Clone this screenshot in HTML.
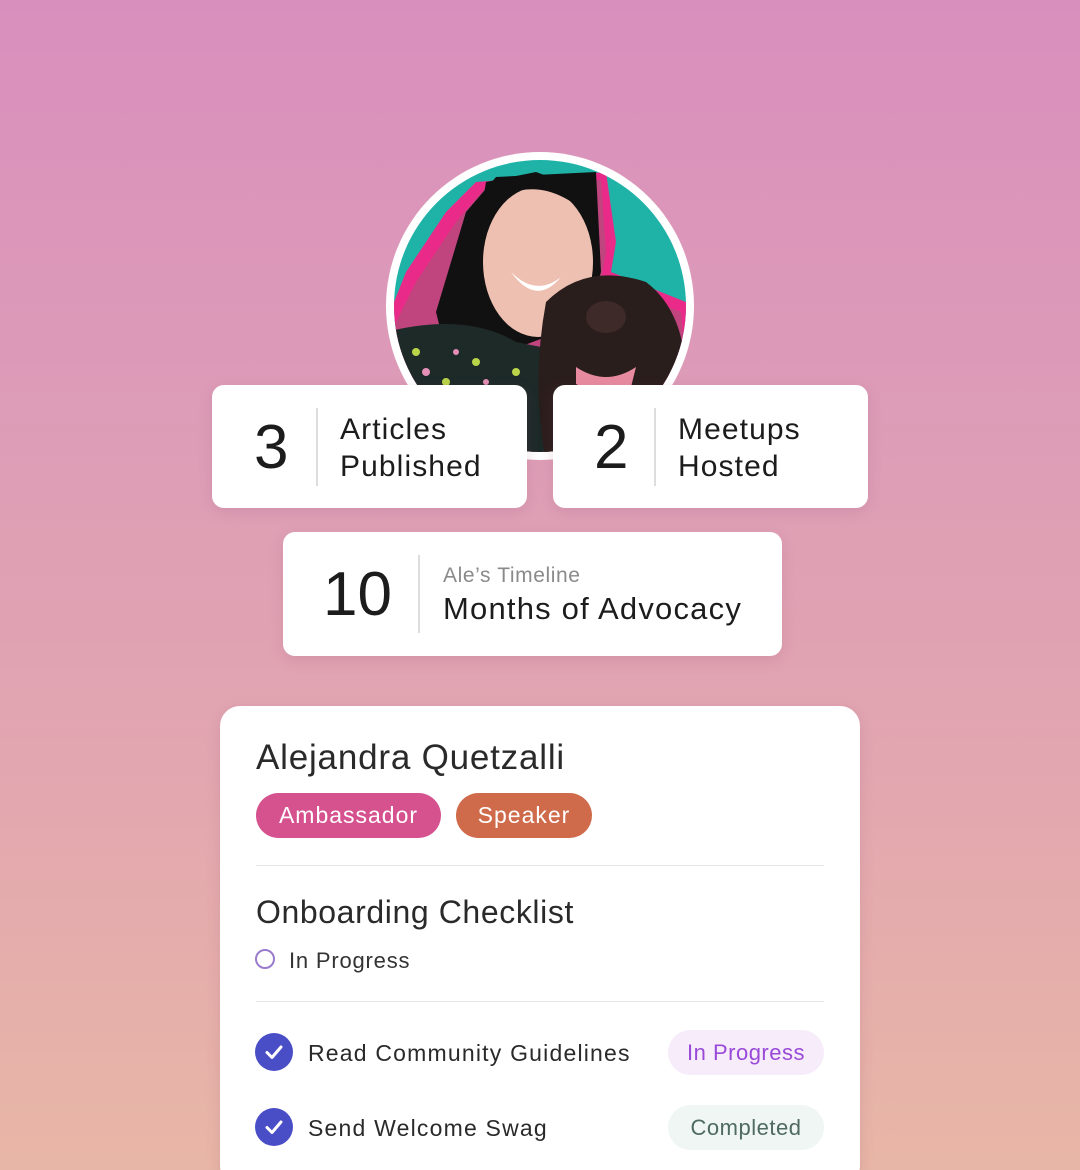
<!DOCTYPE html>
<html style="background:#e8b6a6"><head><meta charset="utf-8"><style>
*{margin:0;padding:0;box-sizing:border-box}
html,body{width:1080px;height:1170px;overflow:hidden}
body{position:relative;font-family:"Liberation Sans",sans-serif;background:linear-gradient(180deg,#d98fbd 0%,#dd9cb7 35%,#e2a6b0 65%,#e8b6a6 100%)}
.abs{position:absolute}
.card{position:absolute;background:#fff;border-radius:12px;box-shadow:0 4px 14px rgba(150,80,110,.18)}
.num{position:absolute;font-size:62px;color:#1c1c1c;line-height:1}
.div{position:absolute;width:2px;background:#ddd}
.lbl{position:absolute;font-size:30px;color:#1c1c1c;line-height:37px;letter-spacing:1.1px}
.pill{position:absolute;border-radius:23px;color:#fff;font-size:23px;text-align:center;line-height:45px;letter-spacing:1px}
.hr{position:absolute;left:36px;width:568px;height:1px;background:#e6e6e6}
.chk{position:absolute;width:38px;height:38px;border-radius:50%;background:#4a4ec6}
</style></head><body>
<svg class="abs" style="left:386px;top:152px" width="308" height="310" viewBox="0 0 308 310">
<defs><clipPath id="c"><circle cx="154" cy="154" r="146"/></clipPath></defs>
<circle cx="154" cy="154" r="154" fill="#fff"/>
<g clip-path="url(#c)">
<rect width="308" height="310" fill="#1fb3a8"/>
<path d="M20 120 L60 60 L90 30 L220 20 L230 90 L225 120 L300 150 L308 310 L0 310 L0 170 Z" fill="#ea2a88"/>
<path d="M30 130 L70 70 L100 35 L215 28 L220 100 L215 130 L295 160 L308 310 L0 310 L5 180 Z" fill="#c0457f"/>
<path d="M50 160 L80 60 L110 25 L210 20 L215 120 L200 170 L120 200 L60 200 Z" fill="#111"/>
<ellipse cx="152" cy="110" rx="55" ry="75" fill="#eec0b2"/>
<path d="M95 60 Q150 10 210 70 L205 40 L150 20 L100 30 Z" fill="#111"/>
<path d="M125 120 Q150 145 175 125 Q150 155 125 120Z" fill="#fff"/>
<path d="M0 180 Q80 160 130 190 L180 200 L170 310 L0 310 Z" fill="#1d2a28"/>
<g fill="#b9d448"><circle cx="30" cy="200" r="4"/><circle cx="60" cy="230" r="4"/><circle cx="90" cy="210" r="4"/><circle cx="110" cy="250" r="4"/><circle cx="45" cy="260" r="4"/><circle cx="130" cy="220" r="4"/></g>
<g fill="#e48fb5"><circle cx="40" cy="220" r="4"/><circle cx="80" cy="250" r="4"/><circle cx="100" cy="230" r="3"/><circle cx="70" cy="200" r="3"/></g>
<path d="M160 150 Q200 110 260 130 Q300 160 300 230 L290 310 L160 310 Q145 230 160 150Z" fill="#2a1e1c"/>
<ellipse cx="220" cy="165" rx="20" ry="16" fill="#3e2a28"/>
<path d="M190 215 Q220 235 250 215 L245 235 Q215 245 190 232Z" fill="#e88ba0"/>
</g></svg>

<div class="card" style="left:212px;top:385px;width:315px;height:123px">
<div class="num" style="left:42px;top:32px">3</div><div class="div" style="left:104px;top:23px;height:78px"></div>
<div class="lbl" style="left:128px;top:26px">Articles<br>Published</div></div>
<div class="card" style="left:553px;top:385px;width:315px;height:123px">
<div class="num" style="left:41px;top:32px">2</div><div class="div" style="left:101px;top:23px;height:78px"></div>
<div class="lbl" style="left:125px;top:26px">Meetups<br>Hosted</div></div>
<div class="card" style="left:283px;top:532px;width:499px;height:124px">
<div class="num" style="left:40px;top:32px">10</div><div class="div" style="left:135px;top:23px;height:78px"></div>
<div class="abs" style="left:160px;top:32px;font-size:21px;color:#8a8a8a;letter-spacing:0.6px">Ale’s Timeline</div>
<div class="abs" style="left:160px;top:59px;font-size:31px;color:#1c1c1c;letter-spacing:1.2px">Months of Advocacy</div></div>

<div class="card" style="left:220px;top:706px;width:640px;height:480px;border-radius:20px">
<div class="abs" style="left:36px;top:32px;font-size:35px;color:#2a2a2a;letter-spacing:0.8px">Alejandra Quetzalli</div>
<div class="pill" style="left:36px;top:87px;width:185px;background:#d5528f">Ambassador</div>
<div class="pill" style="left:236px;top:87px;width:136px;background:#cf6b4b">Speaker</div>
<div class="hr" style="top:159px"></div>
<div class="abs" style="left:36px;top:188px;font-size:32px;color:#2a2a2a;letter-spacing:0.6px">Onboarding Checklist</div>
<div class="abs" style="left:35px;top:243px;width:20px;height:20px;border:2.5px solid #9b7bcc;border-radius:50%"></div>
<div class="abs" style="left:69px;top:242px;font-size:22px;color:#333;letter-spacing:0.8px">In Progress</div>
<div class="hr" style="top:295px"></div>
<div class="chk" style="left:35px;top:327px"><svg width="38" height="38"><path d="M12 19.5 L17 24.5 L26 14" stroke="#fff" stroke-width="3" fill="none" stroke-linecap="round" stroke-linejoin="round"/></svg></div>
<div class="abs" style="left:88px;top:334px;font-size:23px;color:#2a2a2a;letter-spacing:1.2px">Read Community Guidelines</div>
<div class="pill" style="left:448px;top:324px;width:156px;background:#f6ecfa;color:#9a4ad8;font-size:22px;letter-spacing:0.5px">In Progress</div>
<div class="chk" style="left:35px;top:402px"><svg width="38" height="38"><path d="M12 19.5 L17 24.5 L26 14" stroke="#fff" stroke-width="3" fill="none" stroke-linecap="round" stroke-linejoin="round"/></svg></div>
<div class="abs" style="left:88px;top:409px;font-size:23px;color:#2a2a2a;letter-spacing:1.2px">Send Welcome Swag</div>
<div class="pill" style="left:448px;top:399px;width:156px;background:#eff6f3;color:#4f6a63;font-size:22px;letter-spacing:0.5px">Completed</div>
</div>
</body></html>
